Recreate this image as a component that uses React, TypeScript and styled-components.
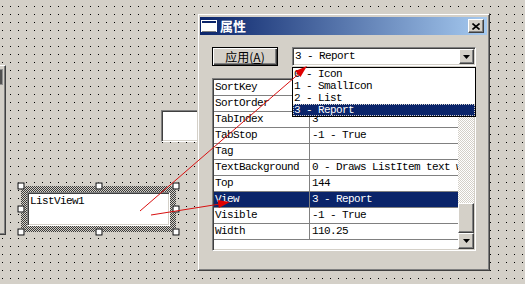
import styled, { createGlobalStyle, css } from 'styled-components';

const GlobalStyle = createGlobalStyle`
  html, body {
    margin: 0;
    padding: 0;
    background: #d4d0c8;
  }
`;

const raised = css`
  border: 1px solid;
  border-color: #ffffff #404040 #404040 #ffffff;
  box-shadow: inset -1px -1px #808080, inset 1px 1px #d4d0c8;
`;

const sunken = css`
  border: 1px solid;
  border-color: #808080 #ffffff #ffffff #808080;
  box-shadow: inset 1px 1px #404040, inset -1px -1px #d4d0c8;
`;

const mono = css`
  font-family: 'Liberation Mono', 'Noto Sans CJK SC', monospace;
  font-size: 11px;
  letter-spacing: -0.6px;
`;

const Canvas = styled.div`
  position: relative;
  width: 525px;
  height: 284px;
  overflow: hidden;
  background-color: #d4d0c8;
  background-image: conic-gradient(from 270deg at 1px 1px, #000 90deg, transparent 0);
  background-size: 8px 8px;
  background-position: 2px 6px;
`;

const LeftPanel = styled.div`
  position: absolute;
  left: -40px;
  top: 65px;
  width: 46px;
  height: 170px;
  box-sizing: border-box;
  background: #d4d0c8;
  border-top: 1px solid #ffffff;
  border-right: 1px solid #404040;
  border-bottom: 1px solid #404040;
  box-shadow: inset -1px -1px #808080;
`;

const LeftKnob = styled.div`
  position: absolute;
  right: 2px;
  top: 3px;
  width: 42px;
  height: 14px;
  background: #505050;
  border: 1px solid #909090;
`;

const TextBox = styled.div`
  position: absolute;
  left: 161px;
  top: 110px;
  width: 60px;
  height: 32px;
  box-sizing: border-box;
  background: #ffffff;
  ${sunken};
`;

const SelectFrame = styled.div`
  position: absolute;
  left: 21px;
  top: 186px;
  width: 155px;
  height: 46px;
  box-sizing: border-box;
  padding: 6px;
  background: repeating-conic-gradient(#3a3a3a 0 25%, #d4d0c8 0 50%) 0 0 / 2px 2px;
`;

const ListViewBox = styled.div`
  height: 100%;
  box-sizing: border-box;
  background: #ffffff;
  ${sunken};
  padding: 2px 2px;
  ${mono};
  line-height: 12px;
  color: #000;
`;

const Handle = styled.div<{ $x: string; $y: string }>`
  position: absolute;
  left: ${(p) => p.$x};
  top: ${(p) => p.$y};
  width: 7px;
  height: 7px;
  box-sizing: border-box;
  transform: translate(-50%, -50%);
  background: #ffffff;
  border: 1px solid #000;
`;

const Dialog = styled.div`
  position: absolute;
  left: 197px;
  top: 13px;
  width: 293px;
  height: 258px;
  box-sizing: border-box;
  padding: 3px 2px 2px 2px;
  background: #d4d0c8;
  border: 1px solid;
  border-color: #d4d0c8 #404040 #404040 #d4d0c8;
  box-shadow: inset 1px 1px #ffffff, inset -1px -1px #808080;
  display: flex;
  flex-direction: column;
`;

const TitleBar = styled.div`
  height: 18px;
  display: flex;
  align-items: center;
  padding: 0 3px 0 1px;
  background: linear-gradient(to right, #0a246a, #a6caf0);
`;

const TitleText = styled.span`
  margin-left: 3px;
  color: #ffffff;
  font-family: 'Noto Sans CJK SC', sans-serif;
  font-weight: 700;
  font-size: 13px;
  line-height: 18px;
`;

const CloseButton = styled.div`
  margin-left: auto;
  width: 16px;
  height: 14px;
  box-sizing: border-box;
  background: #d4d0c8;
  ${raised};
  display: flex;
  align-items: center;
  justify-content: center;
`;

const DialogBody = styled.div`
  display: flex;
  flex-direction: column;
  padding: 12px 11px 0 12px;
`;

const TopRow = styled.div`
  display: flex;
  gap: 14px;
  height: 19px;
`;

const ApplyButton = styled.div`
  width: 66px;
  height: 19px;
  box-sizing: border-box;
  border: 1px solid #000;
  background: #d4d0c8;
  box-shadow: inset 1px 1px #ffffff, inset -1px -1px #404040, inset -2px -2px #808080;
  display: flex;
  align-items: center;
  justify-content: center;
  font-family: 'Noto Sans CJK SC', sans-serif;
  font-size: 12px;
  color: #000;
  padding-bottom: 1px;

  u {
    text-decoration: underline;
    text-underline-offset: 1px;
  }
`;

const Combo = styled.div`
  position: relative;
  flex: 1;
  box-sizing: border-box;
  height: 19px;
  padding: 1px;
  background: #ffffff;
  ${sunken};
  display: flex;
  align-items: center;
`;

const ComboText = styled.span`
  flex: 1;
  padding-left: 1px;
  ${mono};
  line-height: 15px;
  color: #000;
`;

const ArrowButton = styled.div<{ $w?: number; $h?: number }>`
  width: ${(p) => p.$w ?? 16}px;
  height: ${(p) => p.$h ?? 16}px;
  box-sizing: border-box;
  flex-shrink: 0;
  background: #d4d0c8;
  ${raised};
  display: flex;
  align-items: center;
  justify-content: center;
`;

const DropList = styled.div`
  position: absolute;
  top: calc(100% + 2px);
  left: -1px;
  right: -1px;
  z-index: 2;
  background: #ffffff;
  border: 1px solid #000;
`;

const DropItem = styled.div<{ $selected?: boolean }>`
  height: 12px;
  padding-left: 1px;
  ${mono};
  line-height: 12px;
  white-space: nowrap;
  color: ${(p) => (p.$selected ? '#ffffff' : '#000')};
  background: ${(p) => (p.$selected ? '#0a246a' : 'transparent')};
  outline: ${(p) => (p.$selected ? '1px dotted #d4d0c8' : 'none')};
  outline-offset: -1px;
`;

const PropGrid = styled.div`
  margin-top: 12px;
  height: 173px;
  box-sizing: border-box;
  padding: 1px;
  background: #ffffff;
  ${sunken};
  display: flex;
`;

const Rows = styled.div`
  flex: 1;
  min-width: 0;
  display: flex;
  flex-direction: column;
  overflow: hidden;
`;

const PropRow = styled.div<{ $selected?: boolean }>`
  display: grid;
  grid-template-columns: 96px 1fr;
  height: 16px;
  flex-shrink: 0;
  box-sizing: border-box;
  border-bottom: 1px solid #808080;
  background: ${(p) => (p.$selected ? '#0a246a' : '#ffffff')};
  color: ${(p) => (p.$selected ? '#ffffff' : '#000')};
  ${mono};
  line-height: 15px;
`;

const NameCell = styled.div`
  box-sizing: border-box;
  border-right: 1px solid #808080;
  padding-left: 1px;
  overflow: hidden;
  white-space: nowrap;
`;

const ValueCell = styled.div`
  padding-left: 2px;
  overflow: hidden;
  white-space: nowrap;
`;

const ScrollBar = styled.div`
  width: 16px;
  display: flex;
  flex-direction: column;
`;

const Track = styled.div`
  flex: 1;
  display: flex;
  flex-direction: column;
  justify-content: flex-end;
  background: repeating-conic-gradient(#ffffff 0 25%, #d4d0c8 0 50%) 0 0 / 2px 2px;
`;

const Thumb = styled.div`
  height: 30px;
  box-sizing: border-box;
  background: #d4d0c8;
  ${raised};
`;

const Overlay = styled.svg`
  position: absolute;
  left: 0;
  top: 0;
  pointer-events: none;
  z-index: 5;
`;

const DownTriangle = () => (
  <svg width="7" height="4" viewBox="0 0 7 4">
    <polygon points="0,0 7,0 3.5,4" fill="#000" />
  </svg>
);

const CloseGlyph = () => (
  <svg width="8" height="7" viewBox="0 0 8 7">
    <path d="M0.5 0.5 L7.5 6.5 M7.5 0.5 L0.5 6.5" stroke="#000" strokeWidth="1.6" fill="none" />
  </svg>
);

const WindowIcon = () => (
  <svg width="16" height="12" viewBox="0 0 16 12">
    <rect x="0" y="0" width="16" height="12" fill="#ffffff" />
    <rect x="1" y="1" width="14" height="2" fill="#0a246a" />
    <rect x="1" y="11" width="14" height="1" fill="#808080" />
  </svg>
);

const viewModes = ['0 - Icon', '1 - SmallIcon', '2 - List', '3 - Report'];

const props: [string, string][] = [
  ['SortKey', ''],
  ['SortOrder', ''],
  ['TabIndex', '3'],
  ['TabStop', '-1 - True'],
  ['Tag', ''],
  ['TextBackground', '0 - Draws ListItem text with'],
  ['Top', '144'],
  ['View', '3 - Report'],
  ['Visible', '-1 - True'],
  ['Width', '110.25'],
];

const handles: [string, string][] = [
  ['0%', '0%'],
  ['50%', '0%'],
  ['100%', '0%'],
  ['0%', '50%'],
  ['100%', '50%'],
  ['0%', '100%'],
  ['50%', '100%'],
  ['100%', '100%'],
];

function App() {
  return (
    <>
      <GlobalStyle />
      <Canvas>
        <LeftPanel>
          <LeftKnob />
        </LeftPanel>
        <TextBox />

        <SelectFrame>
          <ListViewBox>ListView1</ListViewBox>
          {handles.map(([x, y]) => (
            <Handle key={x + y} $x={x} $y={y} />
          ))}
        </SelectFrame>

        <Dialog>
          <TitleBar>
            <WindowIcon />
            <TitleText>属性</TitleText>
            <CloseButton>
              <CloseGlyph />
            </CloseButton>
          </TitleBar>

          <DialogBody>
            <TopRow>
              <ApplyButton>
                应用(<u>A</u>)
              </ApplyButton>
              <Combo>
                <ComboText>3 - Report</ComboText>
                <ArrowButton $w={15} $h={15}>
                  <DownTriangle />
                </ArrowButton>
                <DropList>
                  {viewModes.map((m, i) => (
                    <DropItem key={m} $selected={i === 3}>
                      {m}
                    </DropItem>
                  ))}
                </DropList>
              </Combo>
            </TopRow>

            <PropGrid>
              <Rows>
                {props.map(([name, value]) => (
                  <PropRow key={name} $selected={name === 'View'}>
                    <NameCell>{name}</NameCell>
                    <ValueCell>{value}</ValueCell>
                  </PropRow>
                ))}
              </Rows>
              <ScrollBar>
                <ArrowButton />
                <Track>
                  <Thumb />
                </Track>
                <ArrowButton>
                  <DownTriangle />
                </ArrowButton>
              </ScrollBar>
            </PropGrid>
          </DialogBody>
        </Dialog>

        <Overlay width="525" height="284" viewBox="0 0 525 284">
          <line x1="140" y1="211" x2="302" y2="71" stroke="#d81010" strokeWidth="1" />
          <polygon points="307,66 300.5,76.9 295.3,70.9" fill="#e00000" />
          <line x1="151" y1="215" x2="220" y2="204" stroke="#d81010" strokeWidth="1" />
          <polygon points="230,202 218.8,207.9 217.5,200" fill="#e00000" />
        </Overlay>
      </Canvas>
    </>
  );
}

export default App;
